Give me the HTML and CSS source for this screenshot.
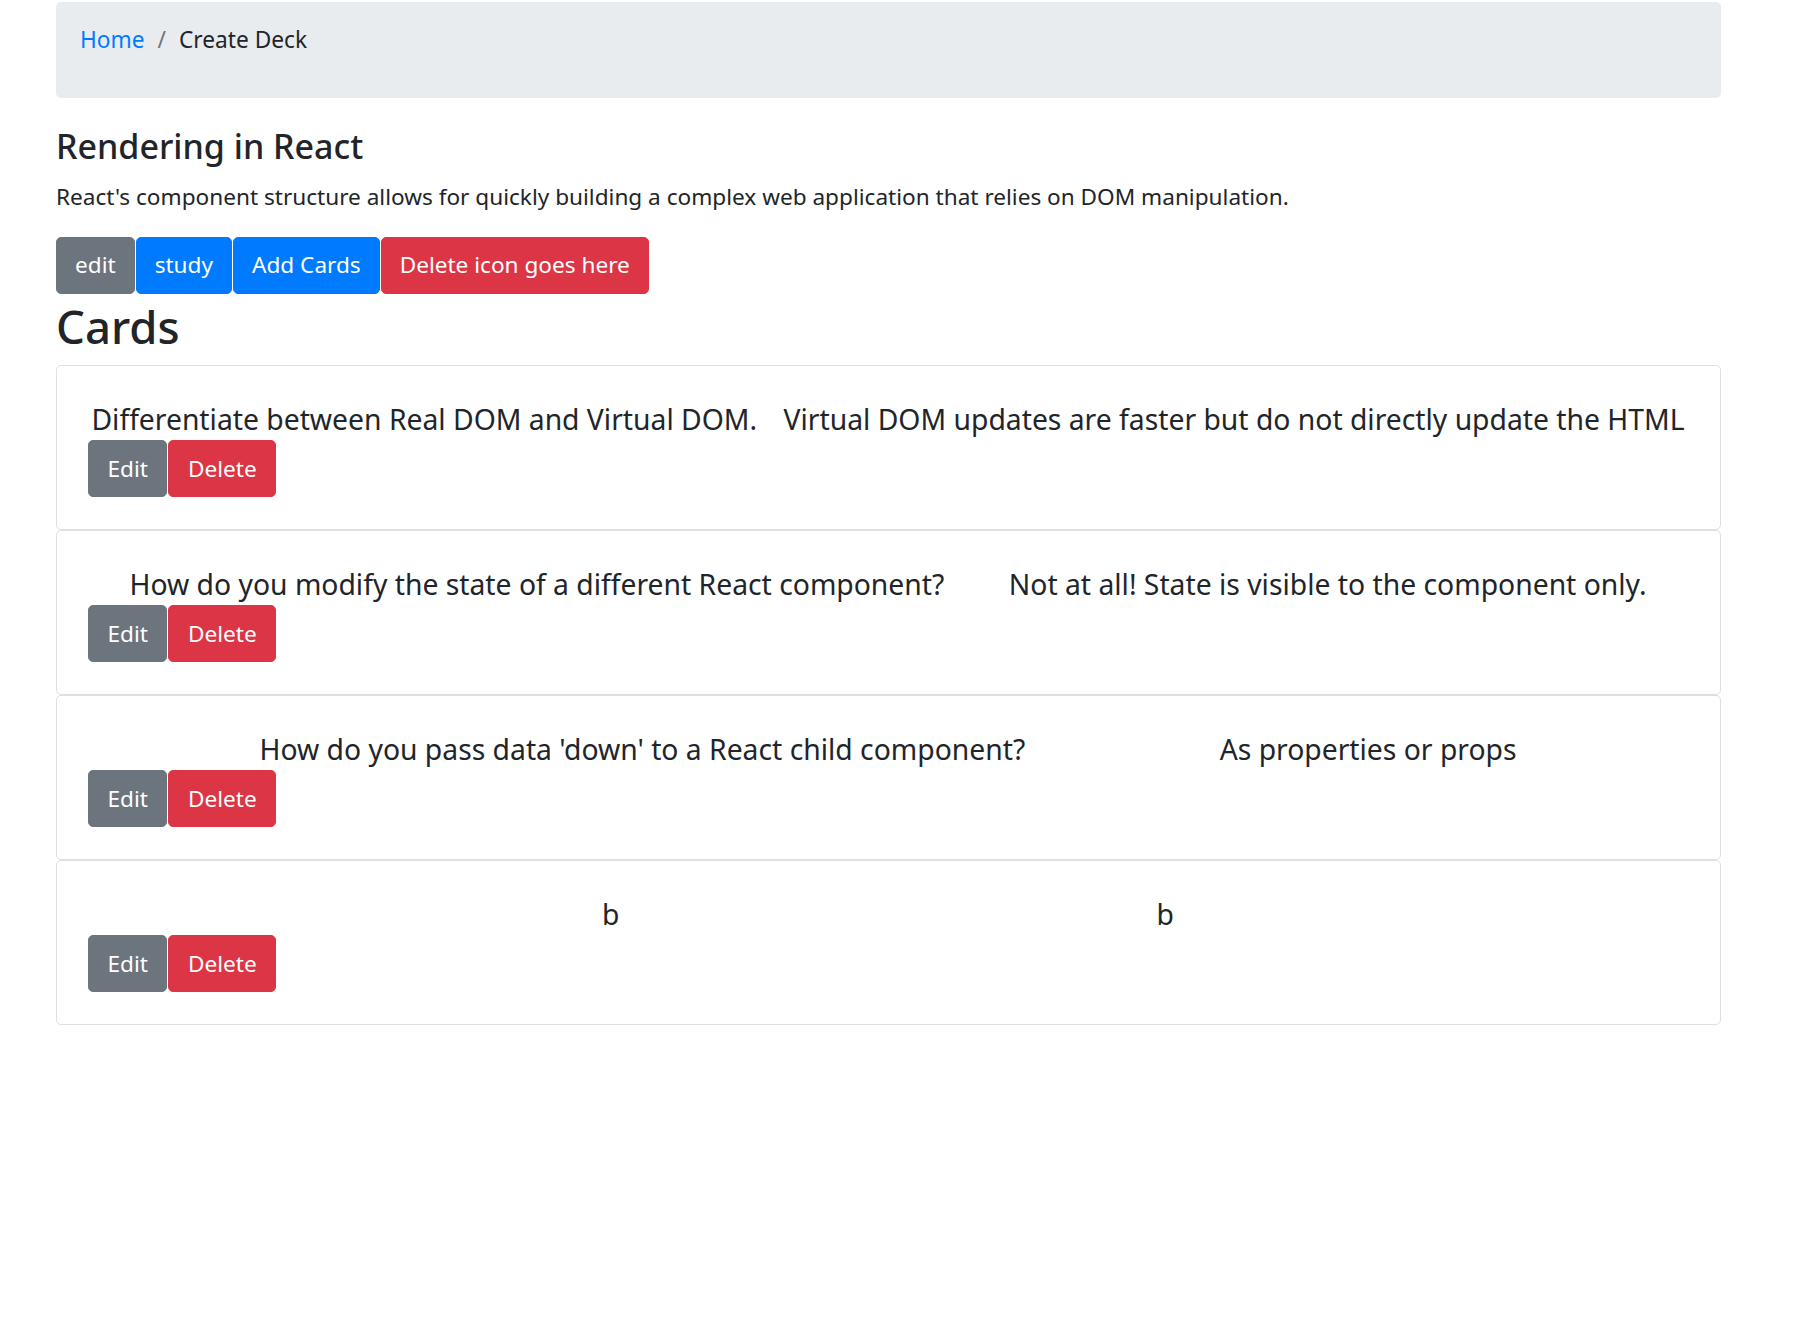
FILE: index.html
```html
<!DOCTYPE html>
<html lang="en">
<head>
<meta charset="utf-8">
<title>Create Deck</title>
<link rel="stylesheet" href="styles.css">
</head>
<body>
<div class="page">
  <nav class="crumb">
    <a class="crumb-link" href="#">Home</a><span class="crumb-sep">/</span><span class="crumb-current">Create Deck</span>
  </nav>
  <h3 class="deck-title">Rendering in React</h3>
  <p class="deck-desc">React's component structure allows for quickly building a complex web application that relies on DOM manipulation.</p>
  <div class="btn-row">
    <button class="btn btn-secondary">edit</button>
    <button class="btn btn-primary">study</button>
    <button class="btn btn-primary">Add Cards</button>
    <button class="btn btn-danger">Delete icon goes here</button>
  </div>
  <h1 class="cards-title">Cards</h1>
  <div class="card-list">
    <div class="card">
      <div class="card-row"><span>Differentiate between Real DOM and Virtual DOM.</span><span>Virtual DOM updates are faster but do not directly update the HTML</span></div>
      <div class="card-actions"><button class="btn btn-secondary">Edit</button><button class="btn btn-danger">Delete</button></div>
    </div>
    <div class="card">
      <div class="card-row"><span>How do you modify the state of a different React component?</span><span>Not at all! State is visible to the component only.</span></div>
      <div class="card-actions"><button class="btn btn-secondary">Edit</button><button class="btn btn-danger">Delete</button></div>
    </div>
    <div class="card">
      <div class="card-row"><span>How do you pass data 'down' to a React child component?</span><span>As properties or props</span></div>
      <div class="card-actions"><button class="btn btn-secondary">Edit</button><button class="btn btn-danger">Delete</button></div>
    </div>
    <div class="card">
      <div class="card-row"><span>b</span><span>b</span></div>
      <div class="card-actions"><button class="btn btn-secondary">Edit</button><button class="btn btn-danger">Delete</button></div>
    </div>
  </div>
</div>
</body>
</html>
```
FILE: styles.css
```css
* { box-sizing: border-box; }
html, body { margin: 0; padding: 0; background: #fff; }
body {
  font-family: "Noto Sans", "Open Sans", sans-serif;
  color: #212529;
  font-size: 22.6px;
}
.page {
  margin-left: 56px;
  width: 1665px;
  padding-top: 2px;
}
.crumb {
  height: 96px;
  background: #e9ecef;
  border-radius: 5px;
  padding: 23px 24px 0;
  line-height: 30px;
  font-size: 22.7px;
}
.crumb-link { color: #007bff; text-decoration: none; }
.crumb-sep { color: #6c757d; padding: 0 13px; }
.crumb-current { color: #212529; }
.deck-title {
  margin: 28px 0 0;
  font-size: 34px;
  font-weight: 500;
  line-height: 41px;
}
.deck-desc {
  margin: 13px 0 0;
  font-size: 22.6px;
  line-height: 34px;
}
.btn-row {
  display: flex;
  gap: 1px;
  margin-top: 22.7px;
}
.btn {
  font-family: inherit;
  font-size: 22.6px;
  line-height: 34px;
  padding: 10.5px 18px;
  border: 1px solid transparent;
  border-radius: 5px;
  color: #fff;
  cursor: pointer;
}
.btn-secondary { background: #6c757d; border-color: #6c757d; }
.btn-primary { background: #007bff; border-color: #007bff; }
.btn-danger { background: #dc3545; border-color: #dc3545; }
.cards-title {
  margin: 6px 0 0;
  font-size: 45.5px;
  font-weight: 500;
  line-height: 53px;
}
.card-list {
  margin-top: 12px;
}
.card {
  border: 1px solid #dfdfdf;
  border-radius: 5px;
  padding: 34px 0 32px;
  height: 165px;
}
.card-row {
  display: flex;
  justify-content: space-evenly;
  margin: 0 9px 0 8px;
  font-size: 28.3px;
  line-height: 39px;
}
.card-actions {
  display: flex;
  gap: 1px;
  margin-top: 1.5px;
  padding-left: 31px;
}
.card-actions .btn { padding-left: 18.5px; padding-right: 18.5px; }
```
